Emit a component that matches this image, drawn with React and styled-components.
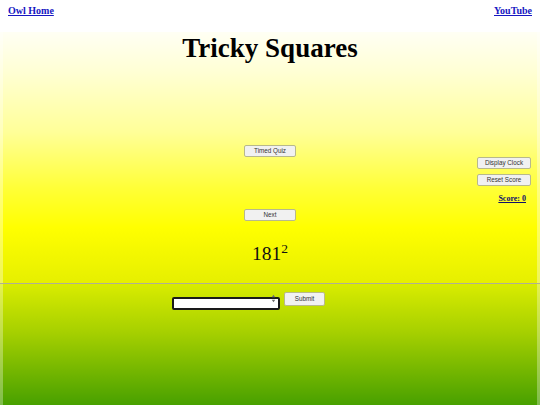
import React from 'react'
import styled, { createGlobalStyle } from 'styled-components'

const GlobalStyle = createGlobalStyle`
  html, body {
    margin: 0;
    padding: 0;
  }
  body {
    background: #fff;
    font-family: "Liberation Serif", "Times New Roman", serif;
  }
`

const Page = styled.div`
  display: flex;
  flex-direction: column;
  height: 405px;
  overflow: hidden;
`

const Header = styled.header`
  height: 32px;
  box-sizing: border-box;
  padding: 5px 8px 0;
  display: flex;
  justify-content: space-between;
  align-items: flex-start;
  background: #fff;
`

const NavLink = styled.a`
  font-size: 10px;
  line-height: 12px;
  font-weight: bold;
  color: #1616c2;
  text-decoration: underline;
`

const QuizPanel = styled.section`
  height: 251px;
  box-sizing: border-box;
  display: flex;
  flex-direction: column;
  background: linear-gradient(#fffff4 0%, #ffffd4 16%, #ffff98 40%, #ffff38 62%, #ffff00 78%, #e6ef00 100%);
  border-left: 3px solid rgba(255, 255, 255, 0.35);
  border-right: 3px solid rgba(255, 255, 255, 0.35);
`

const Title = styled.h1`
  margin: 2px 0 0;
  text-align: center;
  font-size: 27px;
  line-height: 28px;
  font-weight: bold;
  color: #000;
`

const Controls = styled.div`
  display: grid;
  grid-template-columns: 1fr 52px 1fr;
  margin-top: 83px;
`

const CenterColumn = styled.div`
  grid-column: 2;
  display: flex;
  flex-direction: column;
  align-items: center;
`

const SideColumn = styled.div`
  grid-column: 3;
  justify-self: end;
  display: flex;
  flex-direction: column;
  align-items: flex-end;
  gap: 5px;
  padding: 12px 6px 0 0;
`

const Button = styled.button`
  width: ${p => p.$w || 52}px;
  height: ${p => p.$h || 12}px;
  margin-top: ${p => p.$top || 0}px;
  padding: 0;
  box-sizing: border-box;
  font-family: "Liberation Sans", Arial, sans-serif;
  font-size: 6.3px;
  line-height: 1;
  color: #333;
  background: #f1f1f1;
  border: 1px solid #b8b98c;
  border-radius: 2px;
`

const Score = styled.a`
  margin: 4px 5px 0 0;
  font-size: 8px;
  line-height: 8px;
  font-weight: bold;
  color: #10106a;
  text-decoration: underline;
`

const Question = styled.div`
  margin-top: 22px;
  font-size: 19.5px;
  line-height: 22px;
  color: #111;
  white-space: nowrap;

  sup {
    font-size: 13.5px;
    line-height: 0;
  }
`

const Divider = styled.hr`
  margin: 0;
  height: 0;
  border: 0;
  border-top: 1px solid rgba(110, 110, 60, 0.55);
`

const AnswerPanel = styled.section`
  flex: 1;
  display: flex;
  justify-content: center;
  align-items: flex-start;
  gap: 4px;
  padding: 8px 43px 0 0;
  background: linear-gradient(#d9ec00 0%, #a6d000 40%, #48a000 100%);
  border-left: 3px solid rgba(255, 255, 255, 0.3);
  border-right: 3px solid rgba(255, 255, 255, 0.3);
`

const InputWrap = styled.div`
  position: relative;
  width: 108px;
  height: 13px;
`

const NumberInput = styled.input`
  width: 100%;
  height: 100%;
  box-sizing: border-box;
  margin: 0;
  padding: 0 10px 0 3px;
  border: 2px solid #1a1a1a;
  border-radius: 2px;
  background: #fff;
  font-size: 8px;
  outline: none;
`

const Spinner = styled.svg`
  position: absolute;
  right: 4px;
  top: 2px;
  width: 5px;
  height: 9px;
`

export default function App() {
  return (
    <>
      <GlobalStyle />
      <Page>
        <Header>
          <NavLink href="#">Owl Home</NavLink>
          <NavLink href="#">YouTube</NavLink>
        </Header>
        <QuizPanel>
          <Title>Tricky Squares</Title>
          <Controls>
            <CenterColumn>
              <Button>Timed Quiz</Button>
              <Button $top={52}>Next</Button>
              <Question>
                181<sup>2</sup>
              </Question>
            </CenterColumn>
            <SideColumn>
              <Button $w={54}>Display Clock</Button>
              <Button $w={54}>Reset Score</Button>
              <Score href="#">Score: 0</Score>
            </SideColumn>
          </Controls>
        </QuizPanel>
        <Divider />
        <AnswerPanel>
          <InputWrap>
            <NumberInput type="text" inputMode="numeric" defaultValue="" />
            <Spinner viewBox="0 0 5 9">
              <path d="M2.5 0.8 L4.2 3.2 L0.8 3.2 Z" fill="#6f6f6f" />
              <path d="M2.5 8.2 L4.2 5.8 L0.8 5.8 Z" fill="#6f6f6f" />
            </Spinner>
          </InputWrap>
          <Button $w={41} $h={14}>Submit</Button>
        </AnswerPanel>
      </Page>
    </>
  )
}
